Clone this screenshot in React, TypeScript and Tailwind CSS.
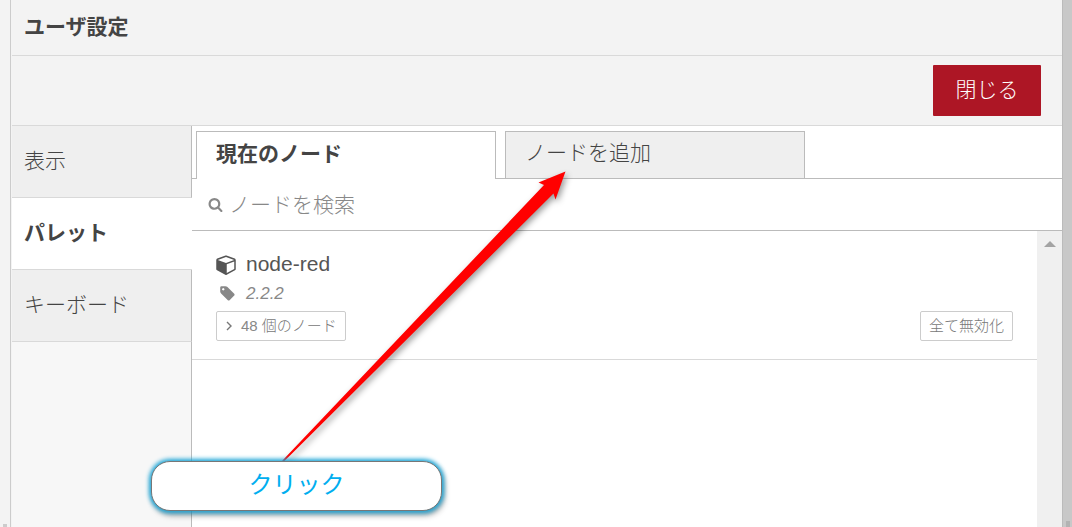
import type { ReactNode } from "react";

function Glyph({ d, viewBox = "0 0 1792 1792", className }: { d: string; viewBox?: string; className: string }) {
  return (
    <svg viewBox={viewBox} fill="currentColor" aria-hidden="true" className={className}>
      <path d={d} />
    </svg>
  );
}

const CUBE =
  "M896 1629l640-349v-636l-640 233v752zm-64-865l698-254-698-254-698 254zm832-252v768q0 35-18 65t-49 47l-704 384q-28 16-61 16t-61-16l-704-384q-31-17-49-47t-18-65v-768q0-40 23-73t61-47l704-256q22-8 44-8t44 8l704 256q38 14 61 47t23 73z";
const SEARCH =
  "M1216 832q0-185-131.5-316.5t-316.5-131.5-316.5 131.5-131.5 316.5 131.5 316.5 316.5 131.5 316.5-131.5 131.5-316.5zm512 832q0 52-38 90t-90 38q-54 0-90-38l-343-342q-179 124-399 124-143 0-273.5-55.5t-225-150-150-225-55.5-273.5 55.5-273.5 150-225 225-150 273.5-55.5 273.5 55.5 225 150 150 225 55.5 273.5q0 220-124 399l343 343q37 37 37 90z";
const TAG =
  "M576 448q0-53-37.5-90.5t-90.5-37.5-90.5 37.5-37.5 90.5 37.5 90.5 90.5 37.5 90.5-37.5 37.5-90.5zm1067 576q0 53-37 90l-491 492q-39 37-91 37-53 0-90-37l-715-716q-38-37-64.5-101t-26.5-117v-416q0-52 38-90t90-38h416q53 0 117 26.5t102 64.5l715 714q37 39 37 91z";

function SideItem({ active = false, children }: { active?: boolean; children: ReactNode }) {
  return (
    <button
      type="button"
      className={
        active
          ? "h-[72px] border-b border-[#d9d9d9] bg-white px-3 pb-0.5 text-left font-bold text-[#444]"
          : "h-[72px] border-r border-b border-r-[#bbb] border-b-[#d9d9d9] bg-[#efefef] px-3 pb-0.5 text-left font-light text-[#444]"
      }
    >
      {children}
    </button>
  );
}

function SmallButton({ children }: { children: ReactNode }) {
  return (
    <button
      type="button"
      className="flex h-[30px] items-center gap-2 rounded-xs border border-[#ccc] bg-white px-2 text-[15px] leading-5 font-light text-[#777]"
    >
      {children}
    </button>
  );
}

export default function App() {
  return (
    <div className="relative flex min-h-screen overflow-hidden bg-[#f3f3f3] font-['Liberation_Sans','Noto_Sans_CJK_JP',sans-serif] text-[21px] leading-8">
      <div className="flex w-[10px] shrink-0 items-end justify-center">
        <div className="h-[3px] w-1 bg-[#ccc]" />
      </div>

      <section className="flex min-w-0 grow flex-col border-x border-l-[#ccc] border-r-[#bbb] pl-px">
        <header className="flex h-14 items-center border-b border-[#d9d9d9] px-3 pb-0.5">
          <h1 className="font-bold text-[#444]">ユーザ設定</h1>
        </header>
        <div className="flex h-[70px] items-center justify-end border-b border-[#d9d9d9] px-[21px]">
          <button type="button" className="h-[51px] w-[108px] rounded-[1px] bg-[#ad1625] pb-0.5 font-light text-white">
            閉じる
          </button>
        </div>

        <div className="flex grow">
          <nav className="flex w-[180px] shrink-0 flex-col">
            <SideItem>表示</SideItem>
            <SideItem active>パレット</SideItem>
            <SideItem>キーボード</SideItem>
            <div className="grow border-r border-[#bbb] bg-[#f7f7f7]" />
          </nav>

          <main className="flex min-w-0 grow flex-col bg-white">
            <div className="flex h-[53px] pt-[5px]" role="tablist">
              <div className="w-1 border-b border-[#bbb]" />
              <button
                type="button"
                role="tab"
                aria-selected="true"
                className="w-[300px] border-x border-t border-[#bbb] px-[19px] pb-1 text-left font-bold text-[#444]"
              >
                現在のノード
              </button>
              <div className="w-[9px] border-b border-[#bbb]" />
              <button
                type="button"
                role="tab"
                aria-selected="false"
                className="w-[300px] border border-[#bbb] bg-[#efefef] px-[19px] pb-1 text-left font-light text-[#444]"
              >
                ノードを追加
              </button>
              <div className="grow border-b border-[#bbb]" />
            </div>

            <label className="flex h-[52px] items-center gap-1.5 border-b border-[#bbb] pl-4 text-[#888]">
              <Glyph d={SEARCH} className="size-[15px]" />
              <input
                type="text"
                aria-label="ノードを検索"
                placeholder="ノードを検索"
                className="h-10 min-w-0 grow bg-transparent pr-4 font-light outline-none placeholder:text-[#888]"
              />
            </label>

            <div className="flex grow">
              <ul className="min-w-0 grow">
                <li className="border-b border-[#d9d9d9] px-6 pt-[17px] pb-[18px]">
                  <div className="flex items-center gap-[10px] text-[#555]">
                    <Glyph d={CUBE} viewBox="0 0 1664 1792" className="h-[21px] w-5" />
                    <span>node-red</span>
                  </div>
                  <div className="flex h-[31px] items-center gap-[10px] pb-1 pl-[3px] text-[17px] text-[#888]">
                    <Glyph d={TAG} className="size-[17px]" />
                    <span className="italic">2.2.2</span>
                  </div>
                  <div className="flex items-center justify-between">
                    <SmallButton>
                      <svg viewBox="0 0 8 12" className="h-3 w-2" fill="none" stroke="currentColor" strokeWidth="1.4" aria-hidden="true">
                        <path d="M2 2l4 4-4 4" />
                      </svg>
                      <span>
                        <span className="text-[#888]">48</span> 個のノード
                      </span>
                    </SmallButton>
                    <SmallButton>全て無効化</SmallButton>
                  </div>
                </li>
              </ul>
              <div className="flex w-[25px] shrink-0 justify-center bg-[#f0f0f0] pt-[10px]">
                <svg viewBox="0 0 12 6" className="h-[6px] w-3" fill="#a3a3a3" aria-hidden="true">
                  <path d="M6 0l6 6H0z" />
                </svg>
              </div>
            </div>
          </main>
        </div>
      </section>

      <div className="flex w-[9px] shrink-0 items-end justify-center bg-[#c8c8c8]">
        <div className="h-[6px] w-1 bg-[#b3b3b3]" />
      </div>

      <svg
        viewBox="0 0 300 310"
        className="pointer-events-none absolute top-[160px] left-[275px] h-[310px] w-[300px] overflow-visible drop-shadow-[2px_3px_3px_rgba(0,0,0,0.4)]"
        aria-hidden="true"
      >
        <path d="M290.5 11.5L263.5 22.5 269 25 7 301 9.500 301 278.500 33.500 280.500 39.500z" fill="#f00" />
      </svg>
      <div className="absolute top-[461px] left-[151px] flex h-[50px] w-[291px] items-center justify-center rounded-[19px] border border-[#777] bg-white pb-0.5 text-2xl text-[#00aeef] shadow-[0_0_4px_2px_#1ba6d8,2px_4px_6px_rgba(0,0,0,0.4)]">
        クリック
      </div>
    </div>
  );
}
